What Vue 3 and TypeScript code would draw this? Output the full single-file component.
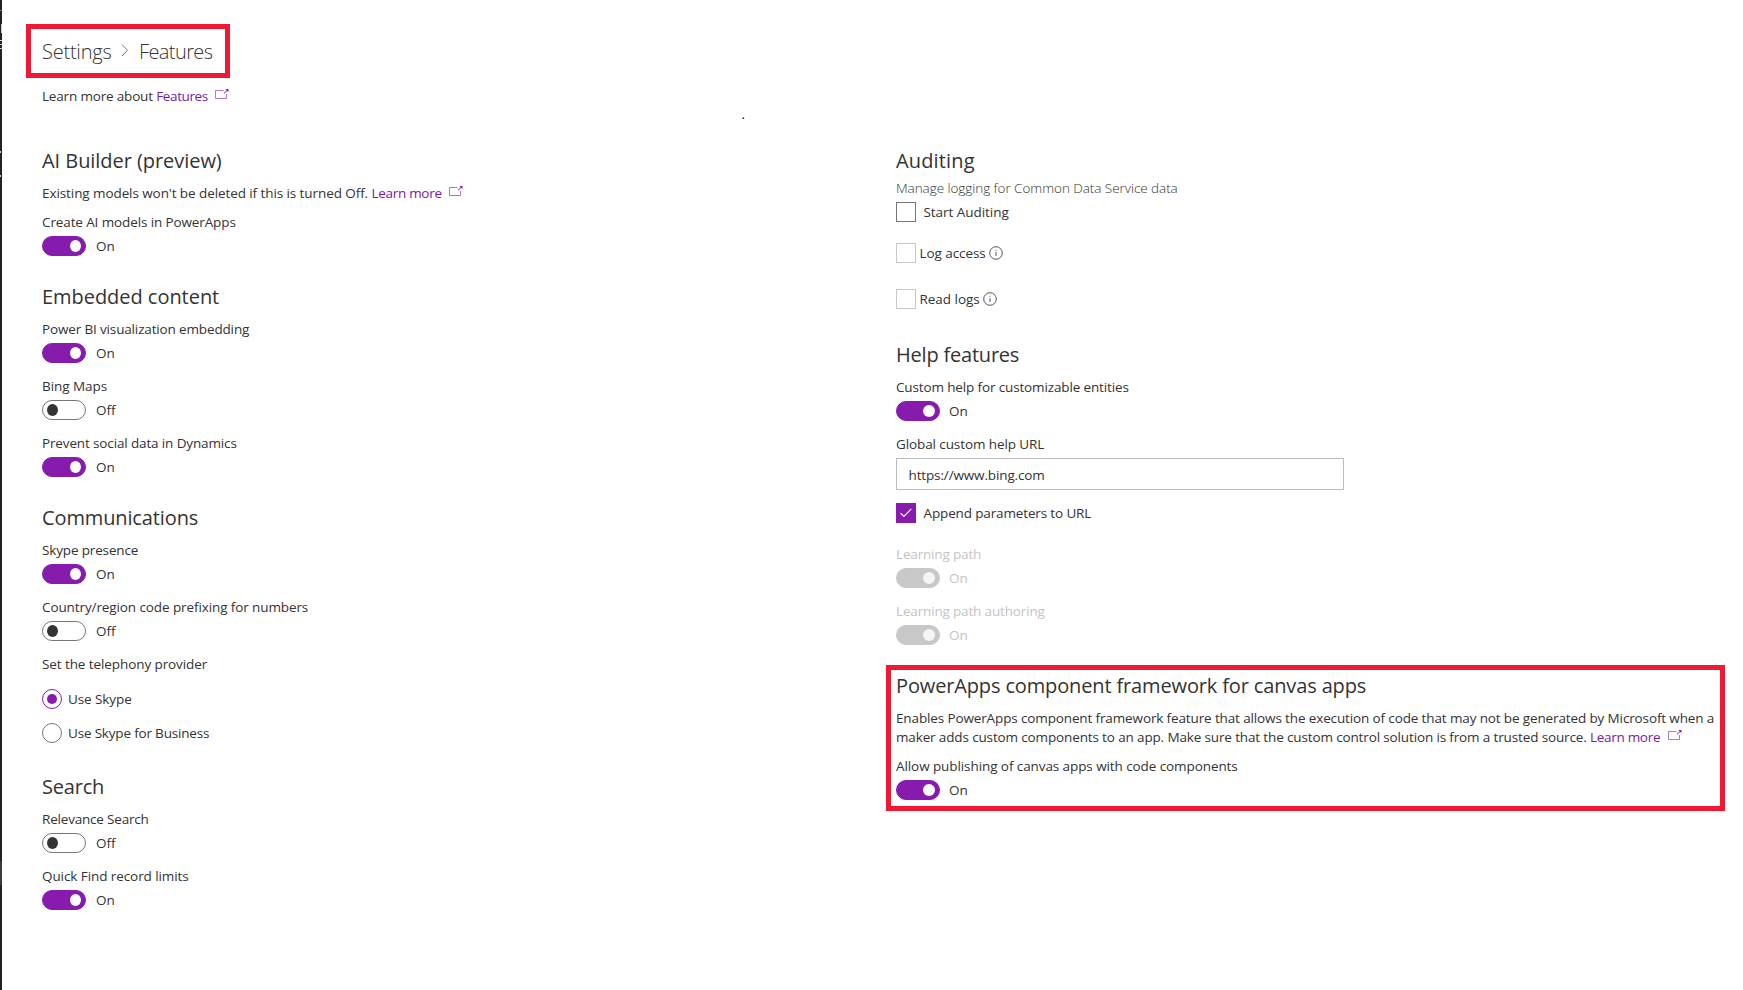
<script setup lang="ts">
import { defineComponent, h, type Directive } from 'vue'

// Blank space that a text keeps after its last letter.
const SIDE_BEARING = 0.8

// Spreads the letters of a text so that it takes up the given width.
const vFit: Directive<HTMLElement, number> = {
  mounted(el, binding) {
    const count = (el.textContent ?? '').length
    const natural = el.getBoundingClientRect().width
    el.style.letterSpacing = `${(binding.value - SIDE_BEARING - natural) / count}px`
  },
}

interface Setting { label: string; on: boolean; width: number }

const embedded: Setting[] = [
  { label: 'Power BI visualization embedding', on: true, width: 208 },
  { label: 'Bing Maps', on: false, width: 66 },
  { label: 'Prevent social data in Dynamics', on: true, width: 195.5 },
]
const communications: Setting[] = [
  { label: 'Skype presence', on: true, width: 97 },
  { label: 'Country/region code prefixing for numbers', on: false, width: 267 },
]
const search: Setting[] = [
  { label: 'Relevance Search', on: false, width: 107.5 },
  { label: 'Quick Find record limits', on: true, width: 147.5 },
]
const learning: Setting[] = [
  { label: 'Learning path', on: true, width: 86 },
  { label: 'Learning path authoring', on: true, width: 149.5 },
]

const LinkIcon = defineComponent(() => () =>
  h('svg', { width: 14, height: 11, viewBox: '0 0 14 11', fill: 'none', stroke: '#861bae' }, [
    h('path', { d: 'M8.5 1.5H.5v8h11V5', 'stroke-opacity': 0.6 }),
    h('path', { d: 'M9 4.3L12.8.9' }),
    h('path', { d: 'M10.3 0h3.2v3.2z', fill: '#861bae', stroke: 'none' }),
  ]),
)
const InfoIcon = defineComponent(() => () =>
  h('svg', { width: 14, height: 14, viewBox: '0 0 14 14', fill: 'none', stroke: '#444' }, [
    h('circle', { cx: 7, cy: 7, r: 6.3, 'stroke-width': 0.9 }),
    h('path', { d: 'M7 6v4M7 3.7v1.1', 'stroke-width': 0.9 }),
  ]),
)
</script>

<template>
  <div class="page">
    <aside class="rail">
      <i class="r1"></i><i class="r2"></i><i class="r3"></i><i class="r4"></i><i class="r5"></i><i class="r6"></i>
    </aside>
    <main>
      <nav class="crumbs">
        <span v-fit="70.3">Settings</span>
        <svg width="8" height="13" viewBox="0 0 8 13" fill="none" stroke="#777"><path d="M1 .7l5.6 5.6L1 12" /></svg>
        <span v-fit="74.3">Features</span>
      </nav>
      <p class="text learn"><span v-fit="115">Learn more about&nbsp;</span><a v-fit="52.5">Features</a><LinkIcon class="ext" /></p>
      <span class="dot">.</span>

      <div class="columns">
        <div class="left">
          <section>
            <h2><span v-fit="180.5">AI Builder (preview)</span></h2>
            <p class="text note"><span v-fit="330.3">Existing models won't be deleted if this is turned Off.&nbsp;</span><a v-fit="71">Learn more</a><LinkIcon class="ext" /></p>
            <div class="setting">
              <div class="text"><span v-fit="194.5">Create AI models in PowerApps</span></div>
              <div class="state"><b class="toggle on"></b><span v-fit="19.5">On</span></div>
            </div>
          </section>
          <section>
            <h2><span v-fit="178">Embedded content</span></h2>
            <div v-for="s in embedded" :key="s.label" class="setting">
              <div class="text"><span v-fit="s.width">{{ s.label }}</span></div>
              <div class="state"><b class="toggle" :class="{ on: s.on }"></b><span v-fit="s.on ? 19.5 : 20.5">{{ s.on ? 'On' : 'Off' }}</span></div>
            </div>
          </section>
          <section>
            <h2><span v-fit="157">Communications</span></h2>
            <div v-for="s in communications" :key="s.label" class="setting">
              <div class="text"><span v-fit="s.width">{{ s.label }}</span></div>
              <div class="state"><b class="toggle" :class="{ on: s.on }"></b><span v-fit="s.on ? 19.5 : 20.5">{{ s.on ? 'On' : 'Off' }}</span></div>
            </div>
            <div class="setting">
              <div class="text"><span v-fit="166">Set the telephony provider</span></div>
              <div class="radios">
                <label><b class="radio on"></b><span v-fit="64.5">Use Skype</span></label>
                <label><b class="radio"></b><span v-fit="142">Use Skype for Business</span></label>
              </div>
            </div>
          </section>
          <section class="search">
            <h2><span v-fit="63">Search</span></h2>
            <div v-for="s in search" :key="s.label" class="setting">
              <div class="text"><span v-fit="s.width">{{ s.label }}</span></div>
              <div class="state"><b class="toggle" :class="{ on: s.on }"></b><span v-fit="s.on ? 19.5 : 20.5">{{ s.on ? 'On' : 'Off' }}</span></div>
            </div>
          </section>
        </div>

        <div class="right">
          <section class="audit">
            <h2><span v-fit="79.5">Auditing</span></h2>
            <p class="text light"><span v-fit="282.5">Manage logging for Common Data Service data</span></p>
            <label class="check start"><b class="box"></b><span v-fit="86">Start Auditing</span></label>
            <label class="check tight log"><b class="box dim"></b><span v-fit="67">Log access</span><InfoIcon class="info" /></label>
            <label class="check tight read"><b class="box dim"></b><span v-fit="61">Read logs</span><InfoIcon class="info" /></label>
          </section>
          <section class="help">
            <h2><span v-fit="124">Help features</span></h2>
            <div class="setting">
              <div class="text"><span v-fit="233.5">Custom help for customizable entities</span></div>
              <div class="state"><b class="toggle on"></b><span v-fit="19.5">On</span></div>
            </div>
            <div class="setting">
              <div class="text"><span v-fit="149">Global custom help URL</span></div>
              <div class="field"><span v-fit="137">https://www.bing.com</span></div>
            </div>
            <label class="check append">
              <b class="box checked"><svg width="12" height="10" viewBox="0 0 12 10" fill="none" stroke="#fff" stroke-width="1.1"><path d="M.6 5.2l3.3 3.3L11.3.9" /></svg></b>
              <span v-fit="168.5">Append parameters to URL</span>
            </label>
            <div class="disabled">
              <div v-for="s in learning" :key="s.label" class="setting">
                <div class="text"><span v-fit="s.width">{{ s.label }}</span></div>
                <div class="state"><b class="toggle on"></b><span v-fit="19.5">On</span></div>
              </div>
            </div>
          </section>
          <section class="framework">
            <h2><span v-fit="471">PowerApps component framework for canvas apps</span></h2>
            <p class="text lines">
              <span v-fit="819">Enables PowerApps component framework feature that allows the execution of code that may not be generated by Microsoft when a</span><br />
              <span v-fit="694.8">maker adds custom components to an app. Make sure that the custom control solution is from a trusted source.&nbsp;</span><a v-fit="71">Learn more</a><LinkIcon class="ext" />
            </p>
            <div class="setting">
              <div class="text"><span v-fit="342.5">Allow publishing of canvas apps with code components</span></div>
              <div class="state"><b class="toggle on"></b><span v-fit="19.5">On</span></div>
            </div>
          </section>
        </div>
      </div>
    </main>
  </div>
</template>

<style>
body { margin: 0; background: #fff; }
</style>

<style scoped>
.page { position: relative; display: flex; height: 990px; overflow: hidden; background: #fff; color: #333; font: 13.5px/20px "Open Sans", "Noto Sans", sans-serif; white-space: nowrap; }
.rail { position: relative; flex: none; width: 2px; background: #222226; }
.rail i { position: absolute; left: 0; width: 2px; height: 1px; background: #ccc; }
.rail .r1 { top: 10px; background: #777; }
.rail .r2 { top: 24px; left: 1px; width: 1px; height: 9px; }
.rail .r3 { top: 40px; box-shadow: 0 4px #ccc, 0 8px #ccc; }
.rail .r4 { top: 151px; height: 2px; width: 1px; }
.rail .r5 { top: 175px; height: 2px; width: 1px; }
.rail .r6 { top: 861px; height: 24px; background: #3c3c40; }
main { flex: 1; padding: 24px 0 0 24px; }
h2, p { margin: 0; font-weight: 400; }
h2 { font-size: 20px; line-height: 28px; margin-bottom: 8px; }
a { color: #7719aa; }
.crumbs { box-sizing: border-box; display: flex; align-items: center; width: 204px; height: 54px; padding: 1px 0 0 11px; border: 5px solid #f01933; font-size: 20px; font-weight: 300; line-height: 28px; }
.crumbs svg { margin: -3px 10.5px 0 9px; }
.learn { margin: 8px 0 0 16px; }
.ext { margin-left: 7.5px; vertical-align: 1px; }
.dot { position: absolute; left: 741.5px; top: 104px; font-size: 13px; color: #000; }
.columns { display: grid; grid-template-columns: 854px 1fr; margin: 41px 0 0 16px; }
.right { width: 839px; }
section + section { margin-top: 27px; }
.note { margin-bottom: 9px; }
.text { height: 20px; }
.setting + .setting { margin-top: 13px; }
.state { display: flex; align-items: center; gap: 10px; height: 20px; margin-top: 4px; }
.right .state { gap: 9px; }
.toggle { box-sizing: border-box; display: flex; align-items: center; width: 44px; height: 20px; padding: 0 4px; border: 1px solid #777; border-radius: 10px; }
.toggle::before { content: ""; width: 12px; height: 12px; border-radius: 50%; background: #333; }
.left .toggle::before { width: 11px; }
.toggle.on { justify-content: flex-end; border-color: #861bae; background: #861bae; }
.toggle.on::before { background: #fff; }
.disabled { margin-top: 21px; color: #c4c4c4; }
.disabled .toggle.on { border-color: #c8c8c8; background: #c8c8c8; }
.disabled .toggle.on::before { background: #f4f4f4; }
.radios { display: grid; gap: 14px; margin-top: 15px; }
.radios label { display: flex; gap: 6px; height: 20px; }
.radio { box-sizing: border-box; display: grid; place-items: center; width: 20px; height: 20px; border: 1px solid #777; border-radius: 50%; }
.radio.on { border-color: #861bae; }
.radio.on::before { content: ""; width: 10px; height: 10px; border-radius: 50%; background: #861bae; }
section.search { margin-top: 30px; }
.audit h2 { margin-bottom: 3px; }
.light { font-weight: 300; }
.check { display: flex; align-items: center; gap: 7.5px; height: 20px; }
.check.tight { gap: 3.5px; }
.box { box-sizing: border-box; display: grid; place-items: center; width: 20px; height: 20px; border: 1px solid #777; }
.box.dim { border-color: #c8c8c8; }
.box.checked { border-color: #861bae; background: #861bae; }
.info { margin-top: -1px; }
.start { margin-top: 4px; }
.log { margin-top: 21px; }
.read { margin-top: 26px; }
section.help { margin-top: 32px; }
.field { box-sizing: border-box; width: 448px; height: 32px; margin-top: 4px; padding: 6px 11.5px; border: 1px solid #bbb; }
.append { margin-top: 13px; }
section.framework { box-sizing: border-box; width: 839px; height: 146px; margin: 20px 0 0 -10px; padding: 2px 0 0 5px; border: 5px solid #f01933; }
.framework h2 { margin-bottom: 9px; }
.lines { height: 38px; line-height: 19px; margin-bottom: 9px; }
</style>
